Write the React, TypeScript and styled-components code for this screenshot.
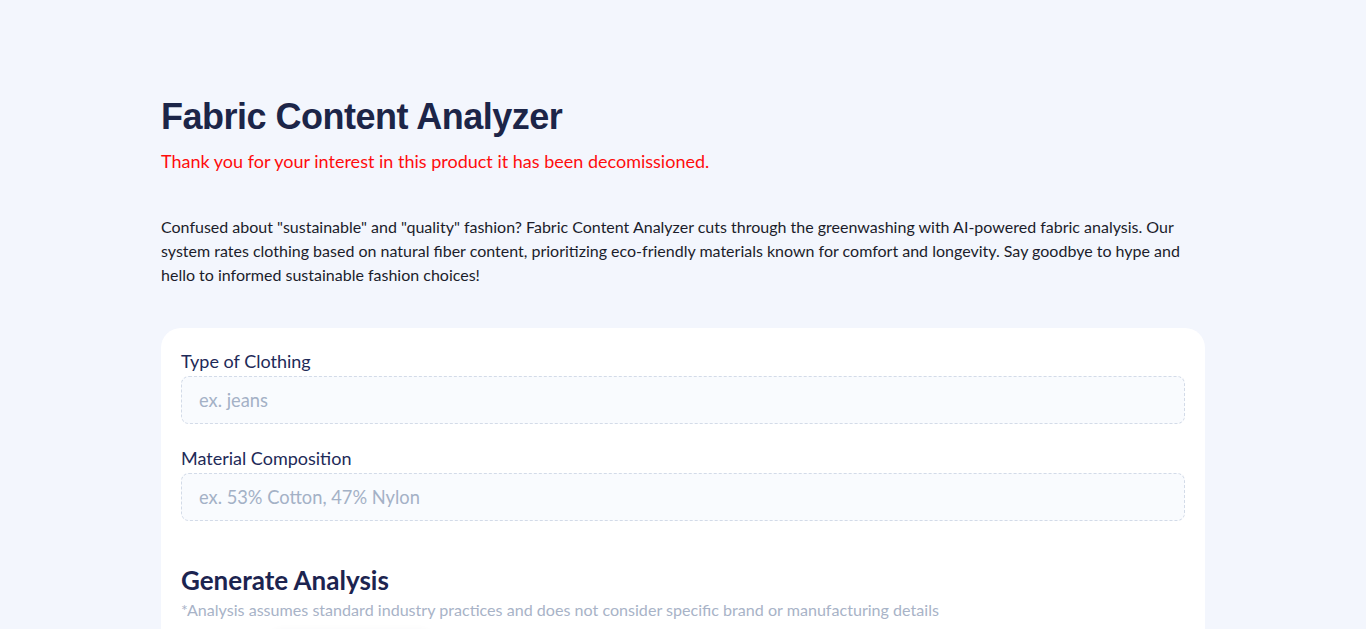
import React from "react";
import styled, { createGlobalStyle } from "styled-components";

const Global = createGlobalStyle`
  html, body { margin: 0; padding: 0; background: #f3f6fd; }
  body { font-family: "Lato", "Liberation Sans", sans-serif; }
  * { box-sizing: border-box; }
`;

const Page = styled.main`
  width: 1044px;
  margin: 0 auto;
  padding-top: 95px;
`;

const Title = styled.h1`
  margin: 0;
  font-family: "Liberation Sans", Arial, sans-serif;
  font-weight: 700;
  font-size: 36px;
  line-height: 44px;
  letter-spacing: -0.5px;
  color: #1c2548;
`;

const Notice = styled.p`
  margin: 10px 0 0;
  font-size: 18px;
  line-height: 24px;
  color: #ff0d0d;
`;

const Intro = styled.p`
  margin: 42px 0 0;
  font-size: 16px;
  line-height: 24px;
  color: #1b1d2b;
`;

const Card = styled.section`
  margin-top: 41px;
  background: #ffffff;
  border-radius: 20px;
  padding: 21px 20px 40px;
  display: flex;
  flex-direction: column;
`;

const Field = styled.div<{ $first?: boolean }>`
  display: flex;
  flex-direction: column;
  gap: 3px;
  margin-top: ${(p) => (p.$first ? "0" : "22px")};
`;

const Label = styled.label`
  font-size: 18px;
  line-height: 24px;
  color: #1e2a58;
`;

const Input = styled.input`
  height: 48px;
  width: 100%;
  border: 1px dashed #d3dbe8;
  border-radius: 8px;
  background: #f9fbfe;
  padding: 0 17px;
  font-family: "Lato", "Liberation Sans", sans-serif;
  font-size: 18.3px;
  color: #1e2a58;
  outline: none;
  &::placeholder { color: #a4b1c6; }
`;

const Heading = styled.h2`
  margin: 43px 0 0;
  font-size: 26px;
  line-height: 32px;
  font-weight: 700;
  color: #1c2450;
`;

const Note = styled.p`
  margin: 4px 0 0;
  font-size: 16.1px;
  line-height: 20px;
  color: #a8b3c7;
`;

const Button = styled.div`
  margin-top: 14px;
  width: 160px;
  height: 44px;
  margin-left: 90px;
  border-radius: 10px;
  background: #ffffff;
  box-shadow: 0 -2px 10px rgba(30, 40, 90, 0.06);
`;

export default function App() {
  return (
    <>
      <Global />
      <Page>
        <Title>Fabric Content Analyzer</Title>
        <Notice>Thank you for your interest in this product it has been decomissioned.</Notice>
        <Intro>
          Confused about "sustainable" and "quality" fashion? Fabric Content Analyzer cuts through the
          greenwashing with AI-powered fabric analysis. Our system rates clothing based on natural fiber
          content, prioritizing eco-friendly materials known for comfort and longevity. Say goodbye to hype
          and hello to informed sustainable fashion choices!
        </Intro>
        <Card>
          <Field $first>
            <Label htmlFor="type">Type of Clothing</Label>
            <Input id="type" placeholder="ex. jeans" />
          </Field>
          <Field>
            <Label htmlFor="material">Material Composition</Label>
            <Input id="material" placeholder="ex. 53% Cotton, 47% Nylon" />
          </Field>
          <Heading>Generate Analysis</Heading>
          <Note>*Analysis assumes standard industry practices and does not consider specific brand or manufacturing details</Note>
          <Button />
        </Card>
      </Page>
    </>
  );
}
